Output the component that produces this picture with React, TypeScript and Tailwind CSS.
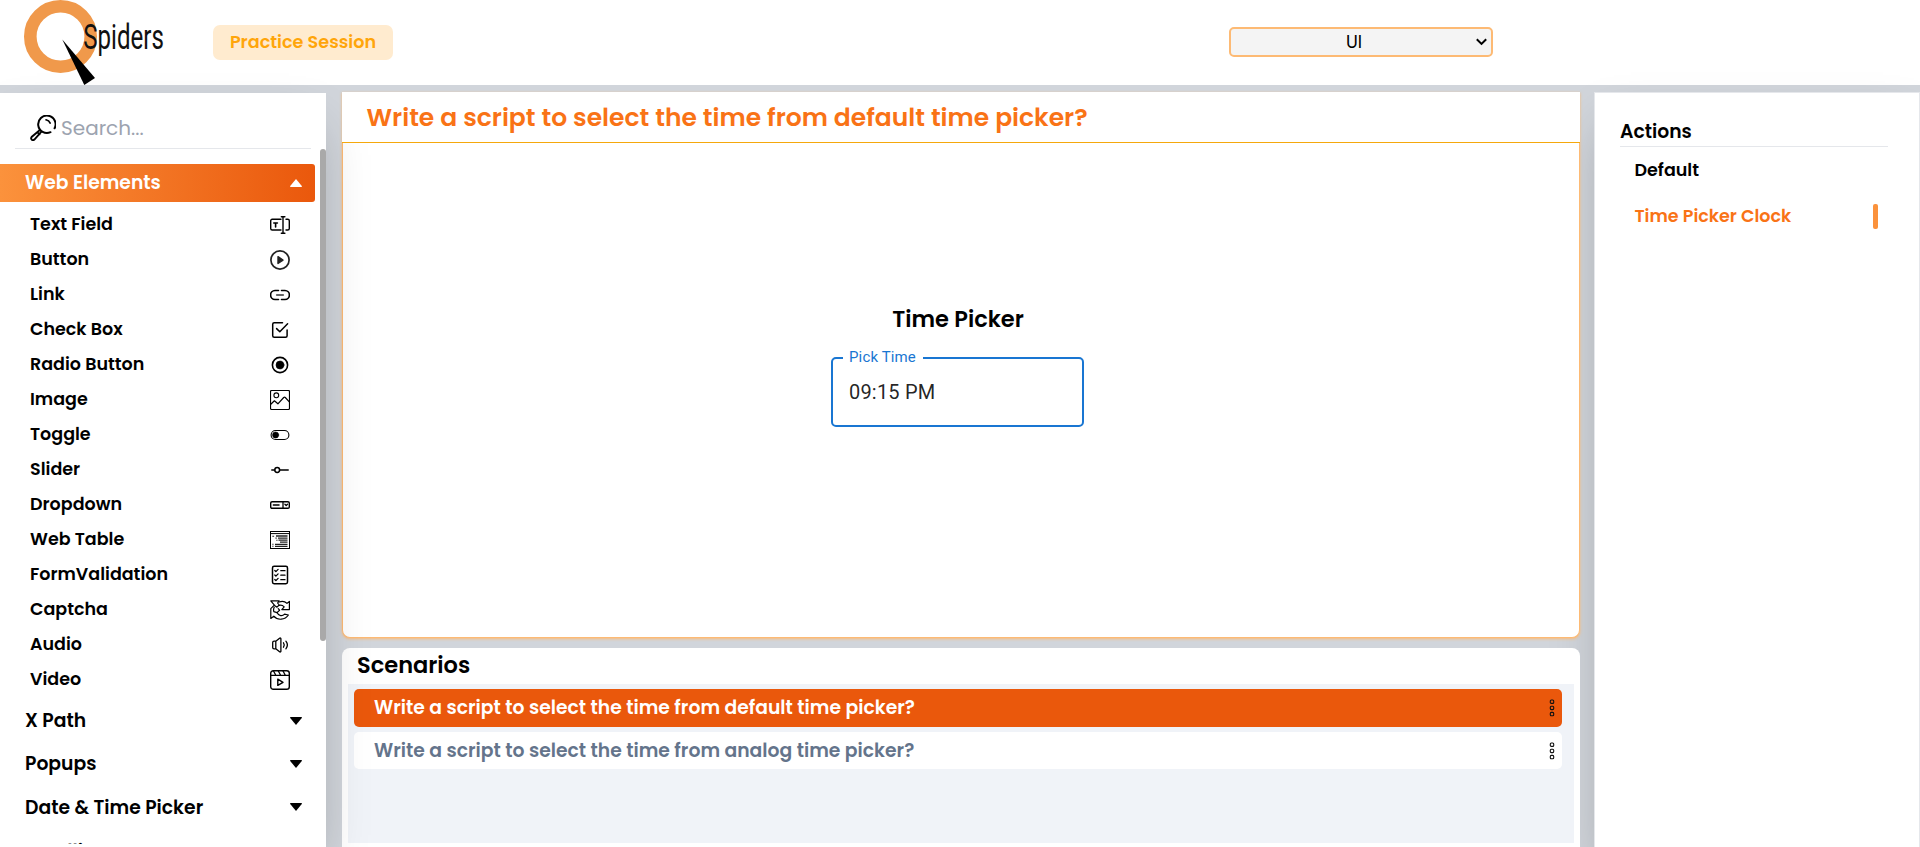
import type { ReactNode } from "react";

function Icon({ children }: { children: ReactNode }) {
  return (
    <svg
      width="20"
      height="20"
      viewBox="0 0 20 20"
      fill="none"
      stroke="#000"
      strokeWidth="1.4"
      strokeLinecap="round"
      strokeLinejoin="round"
    >
      {children}
    </svg>
  );
}

const elements: { label: string; icon: ReactNode }[] = [
  {
    label: "Text Field",
    icon: (
      <Icon>
        <path d="M11 4.3H2.2A1.5 1.5 0 0 0 .7 5.8v7.7A1.5 1.5 0 0 0 2.2 15H11M16 4.3h1.8a1.5 1.5 0 0 1 1.5 1.5v7.7a1.5 1.5 0 0 1-1.5 1.5H16M13 1.7v16.6M11.3 1.7h3.6M11.3 18.3h3.6" />
        <path d="M3.8 8h3.6M5.6 8.3v3.6" strokeWidth="1.6" />
      </Icon>
    ),
  },
  {
    label: "Button",
    icon: (
      <Icon>
        <circle cx="10" cy="10" r="9.1" stroke="#222" strokeWidth="1.7" />
        <path d="M8 6.7v6.8l5-3.4z" fill="#222" stroke="#222" />
      </Icon>
    ),
  },
  {
    label: "Link",
    icon: (
      <Icon>
        <path d="M8.5 5.5H5a4.4 4.5 0 0 0 0 9h3.5M11.5 5.5H15a4.4 4.5 0 0 1 0 9h-3.5" strokeWidth="1.6" />
        <path d="M6.7 10h6.6" stroke="#333" strokeWidth="1.6" />
      </Icon>
    ),
  },
  {
    label: "Check Box",
    icon: (
      <Icon>
        <path
          d="M12.5 2.8H4.2a1.5 1.5 0 0 0-1.5 1.5v11.4a1.5 1.5 0 0 0 1.5 1.5h11.4a1.5 1.5 0 0 0 1.5-1.5V10M6.6 8.6l3.2 3.2 7.8-8"
          strokeWidth="1.5"
        />
      </Icon>
    ),
  },
  {
    label: "Radio Button",
    icon: (
      <Icon>
        <circle cx="10" cy="10" r="7.6" strokeWidth="1.6" />
        <circle cx="10" cy="10" r="4" fill="#000" strokeWidth="0.6" />
      </Icon>
    ),
  },
  {
    label: "Image",
    icon: (
      <Icon>
        <rect x="0.5" y="0.5" width="19" height="19" rx="1.2" strokeWidth="1.2" />
        <circle cx="6.3" cy="5.3" r="2.4" strokeWidth="1.1" />
        <path d="M.8 14.2l3.6-3.4 3.5 3 5.8-6.3c.6-.5 1.1-.5 1.6 0l4 4.3" strokeWidth="1.2" />
      </Icon>
    ),
  },
  {
    label: "Toggle",
    icon: (
      <Icon>
        <rect x="1.1" y="5.5" width="17.8" height="9" rx="4.5" strokeWidth="1.1" />
        <circle cx="5.6" cy="10" r="3.1" fill="#000" strokeWidth="0.5" />
      </Icon>
    ),
  },
  {
    label: "Slider",
    icon: (
      <Icon>
        <circle cx="7.2" cy="10" r="2.4" strokeWidth="1.5" />
        <path d="M1.8 10h2.7M10 10h8.2" strokeWidth="1.5" />
      </Icon>
    ),
  },
  {
    label: "Dropdown",
    icon: (
      <Icon>
        <rect x="0.7" y="6.7" width="18.6" height="6.6" rx="1.4" />
        <path d="M13 7v6M3.3 10h5.8M14.9 9.3l1.3 1.2 1.3-1.2" strokeWidth="1.3" />
      </Icon>
    ),
  },
  {
    label: "Web Table",
    icon: (
      <Icon>
        <rect x="0.5" y="1.5" width="19" height="17" strokeWidth="1" strokeLinejoin="miter" />
        <path d="M.5 3.6h19" strokeWidth="1" />
        <g stroke="#222" strokeLinecap="butt">
          <path d="M6 6h11.5M8 8.1h9.5M8.5 10.2h9M10 12.2h7.5M5 14.3h12.5M5 16.3h12.5" strokeWidth="1.3" />
          <path d="M2.3 6.2h1.8M2.3 14.3h1.2M2.3 16.3h1.2M5.5 8.1h1.2M6.3 10.2h1.2" strokeWidth="1.1" />
        </g>
      </Icon>
    ),
  },
  {
    label: "FormValidation",
    icon: (
      <Icon>
        <rect x="2.5" y="1.3" width="15" height="17.4" rx="1.6" strokeWidth="1.5" />
        <path
          d="M4.8 5.5l1.1 1.1 2.2-2.2M4.8 10l1.1 1.1 2.2-2.2M4.8 14.5l1.1 1.1 2.2-2.2M10.8 5.7H15M10.8 10.2H15M10.8 14.7H15"
          strokeWidth="1.3"
        />
      </Icon>
    ),
  },
  {
    label: "Captcha",
    icon: (
      <Icon>
        <g strokeWidth="1.2">
          <path d="M.8 .9h8.4L7.6 3 9.2 5 7 7.2 4.6 5.4z" />
          <path d="M9.2 2C12 .8 15 1.4 17 3.4l2.4-2v8.2h-7.6l2.4-2.8C12.8 5.4 11 5 9.4 5.3" />
          <path d="M4.2 7.2C3.4 8.8 3.4 10 3.8 11.6l3.2 1c1.6 3.6 5.4 3.8 7.6 1.6l3.8.8c-3.4 5.2-11 5.6-14.6 1.2L.8 18.4V8.6l3-3" />
          <path d="M7 12.6l2.6-2.4-1.4-1.6" />
        </g>
      </Icon>
    ),
  },
  {
    label: "Audio",
    icon: (
      <Icon>
        <path
          d="M5.8 6.2H4.1c-.8 0-1.4.6-1.4 1.4v4.8c0 .8.6 1.4 1.4 1.4h1.7zM5.8 6.2L9.6 3.2c.5-.4 1.3-.1 1.3.6v12.4c0 .7-.8 1-1.3.6l-3.8-3M13.5 7.8c.9 1.3.9 3.1 0 4.4M15.9 6.2c1.8 2.3 1.8 5.3 0 7.6"
          strokeWidth="1.3"
        />
      </Icon>
    ),
  },
  {
    label: "Video",
    icon: (
      <Icon>
        <rect x="0.7" y="0.7" width="18.6" height="18.6" rx="2.6" />
        <path d="M.8 5.3h18.4M3.5 1l2.2 4M8.3 1l2.2 4M13 1l2.2 4" strokeWidth="1.3" />
        <path d="M7.8 9.2v6.2l5.2-3.1z" />
      </Icon>
    ),
  },
];

const groups = ["X Path", "Popups", "Date & Time Picker"];

function Logo() {
  return (
    <svg width="152" height="85" viewBox="0 0 152 85" className="ml-[22px] shrink-0 overflow-visible">
      <circle cx="38.5" cy="36.5" r="30.2" fill="none" stroke="#f0994b" strokeWidth="12.6" />
      <path d="M40.3 39.5L73 78 62.3 85z" fill="#000" />
      <text
        x="61.3"
        y="49"
        fill="#111"
        fontFamily="Roboto, 'Liberation Sans', sans-serif"
        fontSize="35"
        textLength="80.5"
        lengthAdjust="spacingAndGlyphs"
      >
        Spiders
      </text>
    </svg>
  );
}

function Triangle({ up = false, color }: { up?: boolean; color: string }) {
  return (
    <svg width="12" height="8" viewBox="0 0 12 8" fill={color}>
      {up ? <path d="M6 0l6 7.2q0 .8-.8.8H.8Q0 8 0 7.2z" /> : <path d="M6 8L0 .8Q0 0 .8 0h10.4q.8 0 .8.8z" />}
    </svg>
  );
}

function Dots() {
  return (
    <svg width="6" height="20" viewBox="0 0 6 20" fill="none" stroke="#111" strokeWidth="1.1">
      <rect x="1.3" y="2" width="3.4" height="3.4" rx="1" />
      <rect x="1.3" y="8.2" width="3.4" height="3.4" rx="1" />
      <rect x="1.3" y="14.4" width="3.4" height="3.4" rx="1" />
    </svg>
  );
}

function Sidebar() {
  return (
    <aside className="relative z-20 mt-2 flex h-[754px] w-[326px] shrink-0 flex-col bg-white shadow-2xl">
      <div className="mr-[15px] ml-[15px] flex h-14 items-center border-b border-[#e5e7eb] pt-[14px] pl-[15px]">
        <svg
          width="26"
          height="26"
          viewBox="0 0 26 26"
          fill="none"
          stroke="#000"
          strokeWidth="2"
          strokeLinecap="round"
        >
          <path d="M24.6 13.3A8.7 8.7 0 1 0 20.5 17.2" />
          <path d="M16 4.8c2 .4 3.4 1.5 4.2 3.3" strokeWidth="1.6" />
          <path d="M9.6 15.3L1.6 22c-1.4 2 .8 4.2 2.8 2.6l6.8-7.8M7.4 17.4l2.2 1.9" strokeWidth="1.9" />
        </svg>
        <span className="ml-[5px] text-[20px] leading-6 text-[#9ca3af]">Search...</span>
      </div>
      <div className="flex h-[695px] justify-between overflow-hidden">
        <div className="flex w-[315px] flex-col pt-[15px]">
          <div className="flex h-[38px] shrink-0 items-center justify-between rounded-r-[3px] bg-[linear-gradient(to_right,#fb923c,#ea580c)] pr-[13px] pl-[25px] text-white">
            <span className="text-[18.75px] leading-[28px] font-semibold">Web Elements</span>
            <Triangle up color="#fff" />
          </div>
          <ul className="flex shrink-0 flex-col pt-[5px] pb-[2px]">
            {elements.map((item) => (
              <li key={item.label} className="flex h-[35px] items-center justify-between pr-[25px] pl-[30px]">
                <span className="pb-[2px] text-[17.5px] leading-[26px] font-semibold">{item.label}</span>
                <span className="mt-[1px]">{item.icon}</span>
              </li>
            ))}
          </ul>
          {groups.map((label) => (
            <div key={label} className="flex h-[43.3px] shrink-0 items-center justify-between pr-[13px] pl-[25px]">
              <span className="pt-[1px] text-[18.75px] leading-[28px] font-semibold">{label}</span>
              <Triangle color="#000" />
            </div>
          ))}
          <div className="flex h-[46px] shrink-0 items-center pl-[25px] text-[18.75px] font-semibold">Scrolling</div>
        </div>
        <div className="h-[492px] w-[6px] rounded-[3px] bg-[#a9a9a9]" />
      </div>
    </aside>
  );
}

function Stage() {
  return (
    <section className="flex h-[546px] flex-col rounded-b-lg border-x border-b border-[#fdba74] bg-white shadow-[0_1px_3px_#fdba74]">
      <h1 className="relative z-30 -mx-px flex h-[51px] items-center border-b border-[#f5a80c] bg-white pt-[2px] pl-[24.5px] text-[25px] font-semibold text-[#f97316]">
        Write a script to select the time from default time picker?
      </h1>
      <div className="flex flex-col items-center pt-[162px] pr-[7px]">
        <h2 className="pl-px text-[22.5px] leading-[28px] font-semibold">Time Picker</h2>
        <fieldset className="mt-[13px] h-[81px] w-[253px] rounded-[5px] border-2 border-[#1976d2] pl-[10px] font-[Roboto]">
          <legend className="w-[80px] pb-[2px] pl-[6px] text-[15px] leading-[22px] tracking-[0.14px] text-[#1976d2]">
            Pick Time
          </legend>
          <div className="pt-[10px] pl-[6px] text-[20px] leading-[24px] tracking-[0.19px] text-black/87">09:15 PM</div>
        </fieldset>
      </div>
    </section>
  );
}

const scenarioRow = "flex items-center justify-between rounded-[5px] pr-[7px] pl-[20px] text-[18.75px] font-semibold";

function Scenarios() {
  return (
    <section className="mt-[10px] flex h-[205px] flex-col rounded-t-lg bg-white px-[6px]">
      <h2 className="flex h-[36px] items-center pl-[9px] text-[22.5px] font-semibold">Scenarios</h2>
      <div className="flex h-[159px] flex-col gap-[5px] bg-[#f0f3f8] pt-[5px] pr-[12px] pl-[6px]">
        <div className={scenarioRow + " h-[38px] bg-[#ea580c] text-white"}>
          <span>Write a script to select the time from default time picker?</span>
          <Dots />
        </div>
        <div className={scenarioRow + " h-[37px] bg-white text-[#64748b]"}>
          <span className="pt-px">Write a script to select the time from analog time picker?</span>
          <Dots />
        </div>
      </div>
    </section>
  );
}

function Actions() {
  return (
    <aside className="h-[765px] w-[326px] shrink-0 border border-[#e5e7eb] bg-white pr-[31px] pl-[25px] shadow-2xl">
      <h2 className="flex h-[54px] items-end border-b border-[#e5e7eb] text-[18.75px] leading-[28px] font-semibold">
        Actions
      </h2>
      <div className="mt-[11px] flex h-[24px] items-center pl-[14.5px] text-[17.5px] font-semibold">Default</div>
      <div className="mt-[22px] flex h-[25px] items-center justify-between pr-[10px] pl-[14.5px]">
        <span className="text-[17.5px] font-semibold text-[#f97316]">Time Picker Clock</span>
        <span className="h-[25px] w-[5px] rounded-[2px] bg-[#fb923c]" />
      </div>
    </aside>
  );
}

export default function App() {
  return (
    <div className="flex h-[847px] w-[1920px] flex-col overflow-hidden bg-[#d1d5db] font-[Poppins,Inter,sans-serif] text-black">
      <header className="flex h-[85px] shrink-0 items-center bg-white">
        <Logo />
        <div className="ml-[39px] flex h-[35px] w-[180px] items-center justify-center rounded-[7px] bg-[#ffebcf] text-[17.6px] font-semibold text-[#ffa50a]">
          Practice Session
        </div>
        <div className="mb-px ml-[836px] flex h-[30px] w-[264px] items-center rounded-[5px] border-2 border-[#fdba74] bg-[#f4f4f4] text-[17.5px]">
          <span className="w-[246px] text-center">UI</span>
          <svg width="11" height="8" viewBox="0 0 11 8" fill="none" stroke="#000" strokeWidth="2" className="-ml-px">
            <path d="M.8 1.2l4.7 4.7 4.7-4.7" />
          </svg>
        </div>
      </header>
      <div className="flex h-[762px]">
        <Sidebar />
        <main className="relative mt-[7px] ml-[16px] w-[1238px] shrink-0">
          <Stage />
          <Scenarios />
        </main>
        <div className="mt-[7px] ml-[14px]">
          <Actions />
        </div>
      </div>
    </div>
  );
}
